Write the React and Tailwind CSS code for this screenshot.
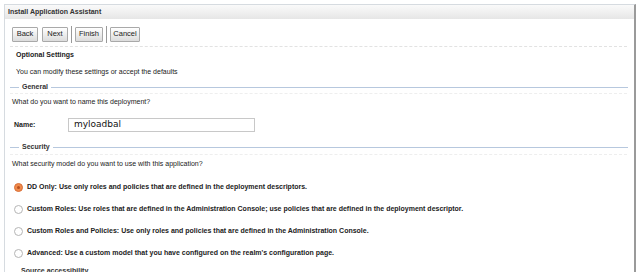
import React from "react";

const F = { fontFamily: '"Liberation Sans", Arial, sans-serif' };

function Btn({ children, w }) {
  return (
    <div className={"h-[15px] flex items-center justify-center border border-[#a9a9a9] rounded-[1px] bg-gradient-to-b from-[#ffffff] to-[#dcdcdc] text-[7.5px] text-[#222] " + w}>
      {children}
    </div>
  );
}

function Legend({ label, className = "" }) {
  return (
    <div className={"h-[10px] flex items-center pl-[5px] pr-[6px] " + className}>
      <div className="w-[9px] h-[1px] bg-[#b7c8de]" />
      <span className="px-[3px] text-[7px] font-bold text-[#333]">{label}</span>
      <div className="flex-1 h-[1px] bg-[#b7c8de]" />
    </div>
  );
}

function Radio({ checked, children }) {
  return (
    <div className="h-[22px] flex items-center pl-[9px]">
      {checked ? (
        <div className="w-[9px] h-[9px] rounded-full bg-[#f08a4b] border border-[#d9703a] flex items-center justify-center">
          <div className="w-[3px] h-[3px] rounded-full bg-[#b8501f]" />
        </div>
      ) : (
        <div className="w-[9px] h-[9px] rounded-full border border-[#b5b5b5] bg-white" />
      )}
      <span className="ml-[4px] text-[7px] font-bold text-[#222]">{children}</span>
    </div>
  );
}

export default function App() {
  return (
    <div className="w-[640px] h-[272px] bg-white overflow-hidden" style={F}>
      <div className="ml-[4px] mt-[4px] w-[632px] h-[300px] border-t border-l border-[#d6dbe0] border-r-2 border-r-[#9a9a9a] bg-white">
        <div className="h-[14px] flex items-center pl-[3px] bg-gradient-to-b from-[#fafafa] to-[#e6e6e6] text-[7px] font-bold text-[#333]">
          Install Application Assistant
        </div>
        <div className="mt-[7px] h-[16px] flex items-center pl-[7px]">
          <Btn w="w-[26px]">Back</Btn>
          <div className="w-[4px]" />
          <Btn w="w-[26px]">Next</Btn>
          <div className="mx-[3px] w-[1px] h-[17px] bg-[#999]" />
          <Btn w="w-[28px]">Finish</Btn>
          <div className="mx-[3px] w-[1px] h-[17px] bg-[#999]" />
          <Btn w="w-[30px]">Cancel</Btn>
        </div>
        <div className="mt-[4px] mx-[5px] mr-[7px] border-t border-dashed border-[#e2e2e2]" />
        <div className="h-[16px] flex items-center pl-[11px] text-[7px] font-bold text-[#222]">
          Optional Settings
        </div>
        <div className="h-[19px] flex items-center pl-[11px] text-[7px] text-[#222]">
          You can modify these settings or accept the defaults
        </div>
        <Legend label="General" />
        <div className="h-[1px] mx-[5px] mr-[7px] mt-[1px] border-t border-dashed border-[#eeeeee]" />
        <div className="h-[16px] flex items-center pl-[7px] text-[7px] text-[#222]">
          What do you want to name this deployment?
        </div>
        <div className="h-[30px] flex items-center pl-[9px]">
          <span className="w-[54px] text-[7px] font-bold text-[#222]">Name:</span>
          <div
            className="w-[187px] h-[14px] border border-[#c8c8c8] flex items-center pl-[5px] text-[9px] text-[#111]"
            style={{ fontFamily: '"DejaVu Sans", sans-serif' }}
          >
            myloadbal
          </div>
        </div>
        <Legend label="Security" className="mt-[2px]" />
        <div className="h-[1px] mx-[5px] mr-[7px] mt-[2px] border-t border-dashed border-[#eeeeee]" />
        <div className="h-[18px] flex items-center pl-[7px] text-[7px] text-[#222]">
          What security model do you want to use with this application?
        </div>
        <div className="h-[3px]" />
        <Radio checked>DD Only: Use only roles and policies that are defined in the deployment descriptors.</Radio>
        <Radio>Custom Roles: Use roles that are defined in the Administration Console; use policies that are defined in the deployment descriptor.</Radio>
        <Radio>Custom Roles and Policies: Use only roles and policies that are defined in the Administration Console.</Radio>
        <Radio>Advanced: Use a custom model that you have configured on the realm's configuration page.</Radio>
        <div className="h-[14px] flex items-center pl-[16px] text-[7px] font-bold text-[#333]">
          Source accessibility
        </div>
      </div>
    </div>
  );
}
